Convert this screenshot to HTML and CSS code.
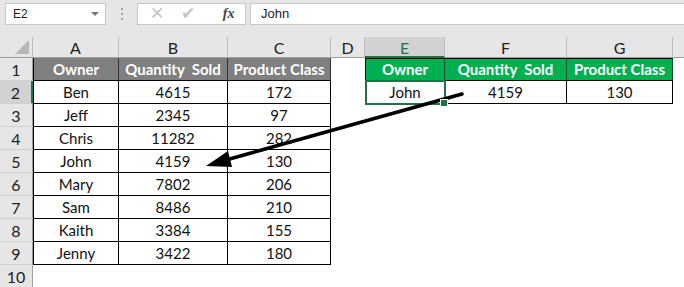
FILE: index.html
```html
<html lang="en">
<head>
    <meta charset="UTF-8">
    <title>Lookup</title>
    <link rel="stylesheet" href="styles.css">
</head>
<body>
    <div id="formula-bar">
        <div class="name-box">E2<span class="drop"></span></div>
        <div class="dots"><i></i><i></i><i></i></div>
        <div class="buttons">
            <span class="btn">&#x2715;</span>
            <span class="btn">&#x2714;</span>
            <span class="btn fx">fx</span>
        </div>
        <div class="formula">John</div>
    </div>

    <div id="sheet">
        <div class="corner"><span></span></div>
        <div class="col">A</div>
        <div class="col">B</div>
        <div class="col">C</div>
        <div class="col">D</div>
        <div class="col active">E</div>
        <div class="col">F</div>
        <div class="col">G</div>
        <div class="col last"></div>

        <div class="row">1</div>
        <div class="c hd first">Owner</div>
        <div class="c hd">Quantity&nbsp; Sold</div>
        <div class="c hd">Product Class</div>
        <div class="c"></div>
        <div class="c gr first top">Owner</div>
        <div class="c gr top">Quantity&nbsp; Sold</div>
        <div class="c gr top">Product Class</div>
        <div class="c"></div>

        <div class="row active">2</div>
        <div class="c t first">Ben</div>
        <div class="c t">4615</div>
        <div class="c t">172</div>
        <div class="c"></div>
        <div class="c t first selected">John</div>
        <div class="c t">4159</div>
        <div class="c t">130</div>
        <div class="c"></div>
    </div>

    <svg class="arrow" width="684" height="287" viewBox="0 0 684 287">
        <line x1="462" y1="94" x2="226" y2="160" stroke="#000" stroke-width="3.5" stroke-linecap="round"/>
        <polygon points="206,166 228,151 232,167" fill="#000"/>
    </svg>

    <script>
        var rows = [
            ['Jeff', '2345', '97'],
            ['Chris', '11282', '282'],
            ['John', '4159', '130'],
            ['Mary', '7802', '206'],
            ['Sam', '8486', '210'],
            ['Kaith', '3384', '155'],
            ['Jenny', '3422', '180']
        ];
        var oSheet = document.getElementById('sheet');
        var html = '';
        for (var i = 0; i < rows.length; i++) {
            html += '<div class="row">' + (i + 3) + '</div>';
            html += '<div class="c t first">' + rows[i][0] + '</div>';
            html += '<div class="c t">' + rows[i][1] + '</div>';
            html += '<div class="c t">' + rows[i][2] + '</div>';
            html += '<div class="c"></div><div class="c"></div><div class="c"></div><div class="c"></div><div class="c"></div>';
        }
        html += '<div class="row">10</div>';
        for (var j = 0; j < 8; j++) {
            html += '<div class="c"></div>';
        }
        oSheet.insertAdjacentHTML('beforeend', html);
    </script>
</body>
</html>
```
FILE: styles.css
```css
*{
    margin: 0;
    padding: 0;
    box-sizing: border-box;
}
body{
    width: 684px;
    height: 287px;
    overflow: hidden;
    background: #fff;
    font-family: Lato, "Liberation Sans", sans-serif;
    position: relative;
}

/* formula bar */
#formula-bar{
    height: 37px;
    background: #e6e6e6;
    display: flex;
    align-items: flex-start;
    padding: 3px 0 0 5px;
    font-family: "Liberation Sans", Arial, sans-serif;
    font-size: 12px;
    color: #222;
}
.name-box{
    width: 101px;
    height: 22px;
    background: #fff;
    border: 1px solid #c6c6c6;
    padding-left: 7px;
    line-height: 20px;
    position: relative;
}
.drop{
    position: absolute;
    right: 6px;
    top: 8px;
    border-left: 4px solid transparent;
    border-right: 4px solid transparent;
    border-top: 4px solid #777;
}
.dots{
    width: 31px;
    height: 22px;
    display: flex;
    flex-direction: column;
    align-items: center;
    justify-content: center;
    gap: 3px;
}
.dots i{
    width: 2px;
    height: 2px;
    background: #a6a6a6;
}
.buttons{
    width: 109px;
    height: 22px;
    background: #fff;
    border: 1px solid #c6c6c6;
    display: flex;
    align-items: center;
    padding-left: 12px;
}
.btn{
    width: 34px;
    color: #c4c4c4;
    font-size: 17px;
    line-height: 20px;
}
.btn.fx{
    color: #444;
    font-family: "Liberation Serif", serif;
    font-style: italic;
    font-weight: bold;
    font-size: 14px;
    padding-left: 10px;
}
.formula{
    flex: 1;
    height: 22px;
    margin-left: 4px;
    background: #fff;
    border: 1px solid #c6c6c6;
    border-right: 0;
    padding-left: 10px;
    line-height: 20px;
    font-size: 13px;
}

/* grid */
#sheet{
    display: grid;
    grid-template-columns: 33px 86px 109px 103px 34px 80px 122px 106px 11px;
    grid-template-rows: 21px repeat(10, 23px);
    background: #fff;
    font-size: 15px;
    color: #111;
}
.corner{
    background: #e6e6e6;
    border-right: 1px solid #bdbdbd;
    border-bottom: 1px solid #9e9e9e;
    position: relative;
}
.corner span{
    position: absolute;
    right: 3px;
    bottom: 3px;
    border-left: 14px solid transparent;
    border-bottom: 14px solid #b7b7b7;
}
.col{
    background: #e6e6e6;
    border-right: 1px solid #bdbdbd;
    border-bottom: 1px solid #9e9e9e;
    text-align: center;
    line-height: 22px;
    font-size: 16px;
    color: #222;
}
.col.active{
    background: #d2d2d2;
    color: #217346;
    border-bottom: 2px solid #217346;
}
.col.last{
    border-right: 0;
}
.row{
    background: #e6e6e6;
    border-right: 1px solid #9e9e9e;
    border-bottom: 1px solid #d0d0d0;
    text-align: center;
    line-height: 23px;
    font-size: 16px;
    color: #222;
}
.row.active{
    background: #d2d2d2;
    border-right: 2px solid #217346;
}
.c{
    line-height: 22px;
    text-align: center;
    white-space: nowrap;
}
.t{
    border-right: 1px solid #000;
    border-bottom: 1px solid #000;
}
.hd{
    background: #808080;
    color: #fff;
    font-weight: bold;
    border-right: 1px solid #333;
    border-bottom: 1px solid #000;
}
.gr{
    background: #00b050;
    color: #fff;
    font-weight: bold;
    border-right: 1px solid #1b4d2e;
    border-bottom: 1px solid #000;
}
.gr.top{
    border-top: 1px solid #000;
    line-height: 20px;
}
.gr.first{
    border-left: 1px solid #000;
}
.t.first, .hd.first{
    border-left: 1px solid #000;
}
.selected{
    position: relative;
}
.selected::after{
    content: "";
    position: absolute;
    left: -1px;
    top: -1px;
    right: -2px;
    bottom: -2px;
    border: 2px solid #217346;
}
.selected::before{
    content: "";
    position: absolute;
    right: -4px;
    bottom: -4px;
    width: 6px;
    height: 6px;
    background: #217346;
    border: 1px solid #fff;
    z-index: 1;
}

.arrow{
    position: absolute;
    left: 0;
    top: 0;
    pointer-events: none;
}
```
